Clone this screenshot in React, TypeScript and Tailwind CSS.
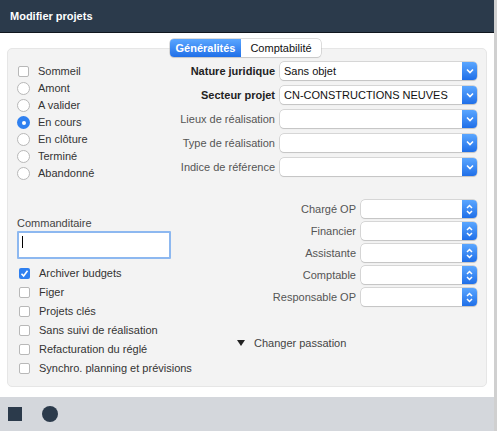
import React from 'react'

const font = { fontFamily: '"Liberation Sans", Arial, sans-serif' }

function Chevron({ updown }: { updown?: boolean }) {
  return (
    <div className="w-[15px] h-[18px] bg-gradient-to-b from-[#5aa6ff] to-[#1f6fe8] rounded-r-[4px] flex items-center justify-center shrink-0">
      {updown ? (
        <svg width="7" height="11" viewBox="0 0 7 11" fill="none" stroke="white" strokeWidth="1.5">
          <path d="M1 4 L3.5 1.5 L6 4" />
          <path d="M1 7 L3.5 9.5 L6 7" />
        </svg>
      ) : (
        <svg width="8" height="6" viewBox="0 0 8 6" fill="none" stroke="white" strokeWidth="1.6">
          <path d="M1 1.5 L4 4.5 L7 1.5" />
        </svg>
      )}
    </div>
  )
}

function Select({ value, updown, w }: { value?: string; updown?: boolean; w: string }) {
  return (
    <div className={`flex h-[18px] ${w} rounded-[4px] bg-white shadow-[0_0_0_0.5px_#b9b9b9,0_1px_1px_rgba(0,0,0,0.15)]`}>
      <div className="flex-1 px-[4px] text-[11px] leading-[18px] text-[#111] truncate">{value}</div>
      <Chevron updown={updown} />
    </div>
  )
}

function Box({ checked }: { checked?: boolean }) {
  return checked ? (
    <div className="w-[11px] h-[11px] rounded-[2px] bg-[#2f80f0] flex items-center justify-center shrink-0">
      <svg width="9" height="9" viewBox="0 0 9 9" fill="none" stroke="white" strokeWidth="1.6">
        <path d="M1.5 4.8 L3.6 7 L7.5 1.8" />
      </svg>
    </div>
  ) : (
    <div className="w-[11px] h-[11px] rounded-[2px] bg-white border border-[#b8b8b8] shrink-0" />
  )
}

function Radio({ on }: { on?: boolean }) {
  return on ? (
    <div className="w-[13px] h-[13px] rounded-full bg-[#2f80f0] flex items-center justify-center shrink-0">
      <div className="w-[4px] h-[4px] rounded-full bg-white" />
    </div>
  ) : (
    <div className="w-[13px] h-[13px] rounded-full bg-white border border-[#b8b8b8] shrink-0" />
  )
}

export default function App() {
  const radios = ['Amont', 'A valider', 'En cours', 'En clôture', 'Terminé', 'Abandonné']
  const topFields: [string, string, boolean][] = [
    ['Nature juridique', 'Sans objet', true],
    ['Secteur projet', 'CN-CONSTRUCTIONS NEUVES', true],
    ['Lieux de réalisation', '', false],
    ['Type de réalisation', '', false],
    ['Indice de référence', '', false],
  ]
  const people = ['Chargé OP', 'Financier', 'Assistante', 'Comptable', 'Responsable OP']
  const checks = ['Figer', 'Projets clés', 'Sans suivi de réalisation', 'Refacturation du réglé', 'Synchro. planning et prévisions']

  return (
    <div style={font} className="w-[497px] h-[431px] flex flex-col bg-white border-r-[3px] border-[#d0d0d0] overflow-hidden">
      <div className="h-[33px] shrink-0 bg-[#2b3a4b] border-b border-[#10161e] flex items-center px-[10px]">
        <span className="text-white font-bold text-[11px]">Modifier projets</span>
      </div>

      <div className="flex-1 relative px-[7px] pt-[15px] pb-[10px]">
        <div className="absolute top-[6px] left-[170px] flex h-[18px] rounded-[4px] bg-white shadow-[0_0_0_0.5px_#bcbcbc,0_1px_1px_rgba(0,0,0,0.12)] text-[11px] z-10">
          <div className="w-[71px] rounded-l-[4px] bg-gradient-to-b from-[#5aa6ff] to-[#1f6fe8] text-white font-bold flex items-center justify-center">Généralités</div>
          <div className="w-[80px] text-[#111] flex items-center justify-center">Comptabilité</div>
        </div>

        <div className="h-[339px] bg-[#f3f3f3] rounded-[5px] border border-[#e6e6e6] flex flex-col pt-[13px] px-[9px] text-[11px] text-[#333]">
          <div className="flex">
            <div className="w-[160px] flex flex-col pt-[1px]">
              <div className="flex items-center gap-[9px] h-[17px] pl-[1px]">
                <Box />
                <span>Sommeil</span>
              </div>
              {radios.map(r => (
                <div key={r} className="flex items-center gap-[8px] h-[17px]">
                  <Radio on={r === 'En cours'} />
                  <span>{r}</span>
                </div>
              ))}
            </div>
            <div className="flex-1 flex flex-col gap-[6px]">
              {topFields.map(([label, value, bold]) => (
                <div key={label} className="flex items-center justify-end gap-[5px]">
                  <span className={bold ? 'font-bold text-[#222]' : 'text-[#555]'}>{label}</span>
                  <Select value={value} w="w-[197px]" />
                </div>
              ))}
            </div>
          </div>

          <div className="flex mt-[18px]">
            <div className="w-[200px] flex flex-col">
              <div className="text-[#444] leading-[13px] pt-[17px]">Commanditaire</div>
              <div className="w-[154px] h-[28px] mt-[1px] bg-white border-2 border-[#8db8f0] rounded-[1px] relative">
                <div className="absolute left-[3px] top-[3px] w-px h-[12px] bg-black" />
              </div>
              <div className="flex flex-col mt-[5px]">
                <div className="flex items-center gap-[9px] h-[19px] pl-[2px]">
                  <Box checked />
                  <span>Archiver budgets</span>
                </div>
                {checks.map(c => (
                  <div key={c} className="flex items-center gap-[9px] h-[19px] pl-[2px]">
                    <Box />
                    <span>{c}</span>
                  </div>
                ))}
              </div>
            </div>
            <div className="flex-1 flex flex-col">
              <div className="flex flex-col gap-[4px] items-end">
                {people.map(p => (
                  <div key={p} className="flex items-center gap-[5px]">
                    <span className="text-[#555]">{p}</span>
                    <Select updown w="w-[116px]" />
                  </div>
                ))}
              </div>
              <div className="flex items-center gap-[9px] mt-[29px] ml-[20px] text-[#444]">
                <svg width="8" height="6" viewBox="0 0 8 6"><path d="M0 0 H8 L4 6 Z" fill="#222" /></svg>
                <span>Changer passation</span>
              </div>
            </div>
          </div>
        </div>
      </div>

      <div className="h-[34px] shrink-0 bg-[#d4d7dc] flex items-center gap-[20px] px-[8px]">
        <div className="w-[14px] h-[14px] bg-[#2b3a4b]" />
        <div className="w-[16px] h-[16px] rounded-full bg-[#2b3a4b]" />
      </div>
    </div>
  )
}
